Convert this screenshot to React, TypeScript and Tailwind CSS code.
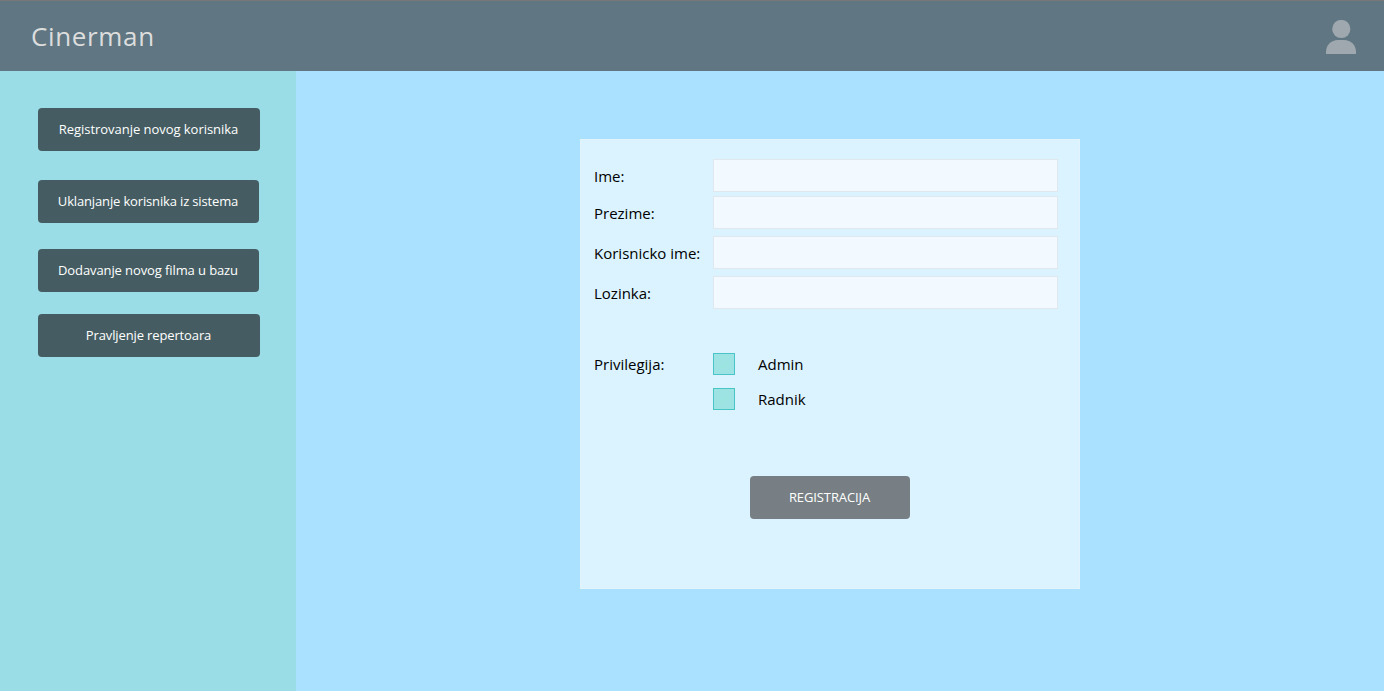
import React, { useState } from "react";

const actions = [
  { label: "Registrovanje novog korisnika", className: "w-[222px] tracking-[-0.04px]" },
  { label: "Uklanjanje korisnika iz sistema", className: "mt-[29px] w-[221px] tracking-[-0.15px]" },
  { label: "Dodavanje novog filma u bazu", className: "mt-[26px] w-[221px] tracking-[-0.1px]" },
  { label: "Pravljenje repertoara", className: "mt-[22px] w-[222px] tracking-[-0.13px]" },
];

const fields = [
  { label: "Ime:", name: "ime", type: "text", className: "" },
  { label: "Prezime:", name: "prezime", type: "text", className: "mt-1" },
  { label: "Korisnicko ime:", name: "username", type: "text", className: "mt-[7px]" },
  { label: "Lozinka:", name: "lozinka", type: "password", className: "mt-[7px]" },
];

const roles = ["Admin", "Radnik"];

function UserIcon() {
  return (
    <svg width="30" height="34" viewBox="0 0 30 34" fill="#9fa8ae" aria-hidden="true">
      <circle cx="15.3" cy="9" r="9.1" />
      <path d="M0 34v-2C0 25 5 20 12 20h6c7 0 12 5 12 12v2Z" />
    </svg>
  );
}

function Role({ label }: { label: string }) {
  const [checked, setChecked] = useState(false);
  return (
    <label className="flex h-[22px] items-center">
      <input type="checkbox" className="sr-only" checked={checked} onChange={() => setChecked(!checked)} />
      <svg width="22" height="22" viewBox="0 0 22 22" fill="none">
        <rect x="0.5" y="0.5" width="21" height="21" fill="#9ee3e3" stroke="#4ac5c5" />
        <path d="m6.5 11 3 4 6.5-7" stroke={checked ? "#ffffff" : "#9be6df"} strokeWidth="1.3" />
      </svg>
      <span className="ml-[23px] text-[15px]">{label}</span>
    </label>
  );
}

export default function App() {
  return (
    <div className="flex h-[691px] w-[1384px] flex-col overflow-hidden bg-[#aae1ff] font-['Open_Sans',sans-serif] text-black">
      <header className="flex h-[71px] shrink-0 items-center justify-between border-t border-[#787878] bg-[#607783] pr-7 pl-[31px]">
        <h1 className="text-[26px] leading-[36px] tracking-[0.65px] text-[#dddddd]">Cinerman</h1>
        <button aria-label="Profil" className="mt-[2px] flex h-[34px]">
          <UserIcon />
        </button>
      </header>
      <div className="flex flex-1">
        <nav className="flex w-[296px] flex-col bg-[#9bdde6] pt-[37px] pl-[38px]">
          {actions.map((a) => (
            <button
              key={a.label}
              className={"h-[43px] rounded-[4px] bg-[#455d62] pr-px text-[13px] whitespace-nowrap text-white " + a.className}
            >
              {a.label}
            </button>
          ))}
        </nav>
        <main className="flex-1 pt-[68px] pl-[284px]">
          <form className="h-[450px] w-[500px] border border-[#e2f3fb] bg-[#daf3ff] pt-[19px] pl-[13px]">
            {fields.map((f) => (
              <label key={f.name} className={"flex h-[33px] items-center " + f.className}>
                <span className="w-[119px] pt-[2px] text-[15px]">{f.label}</span>
                <input
                  type={f.type}
                  name={f.name}
                  className="h-[33px] w-[345px] border border-[#e0e8ed] bg-[#f2faff] px-2 text-[15px] outline-none"
                />
              </label>
            ))}
            <div className="mt-11 flex">
              <span className="w-[119px] text-[15px] leading-[22px]">Privilegija:</span>
              <div className="flex flex-col gap-[13px]">
                {roles.map((r) => (
                  <Role key={r} label={r} />
                ))}
              </div>
            </div>
            <button type="button" className="mt-[66px] ml-[156px] h-[43px] w-[160px] rounded-[4px] bg-[#777f84] pr-px text-[13px] tracking-[-0.1px] text-white">
              REGISTRACIJA
            </button>
          </form>
        </main>
      </div>
    </div>
  );
}
